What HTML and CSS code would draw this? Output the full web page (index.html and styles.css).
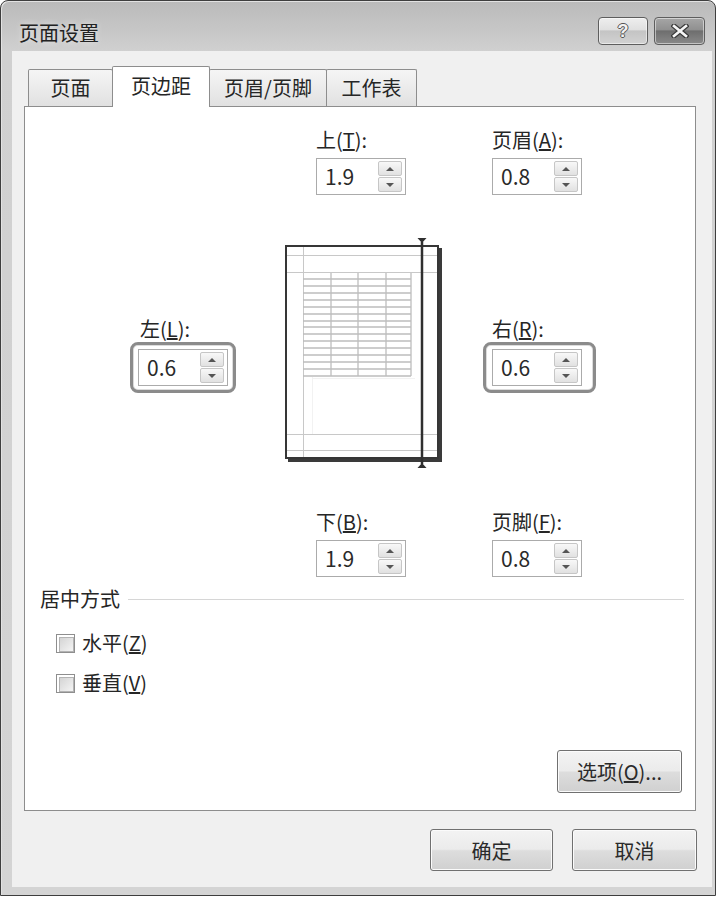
FILE: index.html
```html
<!DOCTYPE html>
<html lang="zh-CN">
<head>
<meta charset="utf-8">
<title>页面设置</title>
<link rel="stylesheet" href="styles.css">
</head>
<body>
<div class="window">
  <div class="titlebar">
    <div class="title">页面设置</div>
    <div class="caption">
      <div class="cap cap-help"><span class="q">?</span></div>
      <div class="cap cap-close">
        <svg width="18" height="14" viewBox="0 0 18 14">
          <path d="M3 2 L15 12 M15 2 L3 12" stroke="#3a3a3a" stroke-width="5" stroke-linecap="square"/>
          <path d="M3 2 L15 12 M15 2 L3 12" stroke="#f6f6f6" stroke-width="2.6" stroke-linecap="square"/>
        </svg>
      </div>
    </div>
  </div>
  <div class="client">
    <div class="tabs">
      <div class="tab t1">页面</div>
      <div class="tab t2 active">页边距</div>
      <div class="tab t3">页眉/页脚</div>
      <div class="tab t4">工作表</div>
    </div>
    <div class="panel">
      <div class="row row-top">
        <div class="field">
          <div class="label">上(<u>T</u>):</div>
          <div class="spin"><span class="val">1.9</span><div class="arrows"><span class="up"></span><span class="down"></span></div></div>
        </div>
        <div class="field">
          <div class="label">页眉(<u>A</u>):</div>
          <div class="spin"><span class="val">0.8</span><div class="arrows"><span class="up"></span><span class="down"></span></div></div>
        </div>
      </div>
      <div class="row row-mid">
        <div class="side side-left">
          <div class="label">左(<u>L</u>):</div>
          <div class="hl">
            <div class="spin"><span class="val">0.6</span><div class="arrows"><span class="up"></span><span class="down"></span></div></div>
          </div>
        </div>
        <svg class="preview" width="160" height="232" viewBox="0 0 160 232">
          <rect x="5" y="11" width="154" height="214" fill="#3a3a3a"/>
          <rect x="3" y="9" width="152" height="212" fill="#fff" stroke="#363636" stroke-width="2"/>
          <g stroke="#c8c8c8" stroke-width="1">
            <line x1="20.5" y1="10" x2="20.5" y2="220"/>
            <line x1="4" y1="18.5" x2="154" y2="18.5"/>
            <line x1="4" y1="35.5" x2="154" y2="35.5"/>
            <line x1="4" y1="197.5" x2="154" y2="197.5"/>
            <line x1="4" y1="213.5" x2="154" y2="213.5"/>
          </g>
          <g stroke="#f2f2f2" stroke-width="1">
            <line x1="29.5" y1="140" x2="29.5" y2="197"/>
            <line x1="29" y1="141.5" x2="132" y2="141.5"/>
          </g>
          <g stroke="#bdbdbd" stroke-width="1.3">
            <line x1="20" y1="42" x2="128" y2="42"/>
            <line x1="20" y1="49" x2="128" y2="49"/>
            <line x1="20" y1="56" x2="128" y2="56"/>
            <line x1="20" y1="63" x2="128" y2="63"/>
            <line x1="20" y1="70" x2="128" y2="70"/>
            <line x1="20" y1="77" x2="128" y2="77"/>
            <line x1="20" y1="84" x2="128" y2="84"/>
            <line x1="20" y1="90" x2="128" y2="90"/>
            <line x1="20" y1="97" x2="128" y2="97"/>
            <line x1="20" y1="104" x2="128" y2="104"/>
            <line x1="20" y1="111" x2="128" y2="111"/>
            <line x1="20" y1="118" x2="128" y2="118"/>
            <line x1="20" y1="125" x2="128" y2="125"/>
            <line x1="20" y1="132" x2="128" y2="132"/>
            <line x1="20" y1="139" x2="128" y2="139"/>
            <line x1="48" y1="36" x2="48" y2="139"/>
            <line x1="75" y1="36" x2="75" y2="139"/>
            <line x1="103" y1="36" x2="103" y2="139"/>
            <line x1="128" y1="36" x2="128" y2="139"/>
          </g>
          <line x1="139" y1="5" x2="139" y2="227" stroke="#303030" stroke-width="2.5"/>
          <polygon points="134.5,1 143.5,1 139,6" fill="#303030"/>
          <polygon points="134.5,231 143.5,231 139,226" fill="#303030"/>
        </svg>
        <div class="side side-right">
          <div class="label">右(<u>R</u>):</div>
          <div class="hl hl-right">
            <div class="spin"><span class="val">0.6</span><div class="arrows"><span class="up"></span><span class="down"></span></div></div>
          </div>
        </div>
      </div>
      <div class="row row-bottom">
        <div class="field">
          <div class="label">下(<u>B</u>):</div>
          <div class="spin"><span class="val">1.9</span><div class="arrows"><span class="up"></span><span class="down"></span></div></div>
        </div>
        <div class="field">
          <div class="label">页脚(<u>F</u>):</div>
          <div class="spin"><span class="val">0.8</span><div class="arrows"><span class="up"></span><span class="down"></span></div></div>
        </div>
      </div>
      <div class="group">
        <div class="group-head"><span>居中方式</span><span class="rule"></span></div>
        <div class="check"><span class="box"></span>水平(<u>Z</u>)</div>
        <div class="check"><span class="box"></span>垂直(<u>V</u>)</div>
      </div>
      <div class="options"><button class="btn btn-opt">选项(<u>O</u>)...</button></div>
    </div>
    <div class="footer">
      <button class="btn btn-ok">确定</button>
      <button class="btn btn-cancel">取消</button>
    </div>
  </div>
</div>
</body>
</html>
```

FILE: styles.css
```css
* { box-sizing: border-box; }
html, body { margin: 0; padding: 0; background: #ffffff; }
body {
  width: 723px;
  height: 901px;
  overflow: hidden;
  font-family: "Noto Sans CJK SC", "Noto Sans", sans-serif;
  color: #262626;
}
.window {
  width: 716px;
  height: 896px;
  border: 1px solid #3e3e3e;
  border-radius: 8px 8px 0 0;
  background: linear-gradient(180deg, #bababa 0px, #c6c6c6 28px, #d0d0d0 50px, #d4d4d4 100%);
  box-shadow: inset 1px 1px 0 #e2e2e2;
  display: flex;
  flex-direction: column;
}
.titlebar {
  height: 50px;
  flex: none;
  display: flex;
  justify-content: space-between;
  align-items: flex-start;
  padding: 0 10px 0 18px;
}
.title {
  margin-top: 20px;
  font-size: 20px;
  line-height: 24px;
  color: #222;
  text-shadow: 0 0 6px rgba(255,255,255,0.7);
}
.caption { display: flex; gap: 6px; margin-top: 16px; }
.cap {
  height: 28px;
  border: 1px solid #5e5e5e;
  border-radius: 4px;
  display: flex;
  align-items: center;
  justify-content: center;
  box-shadow: inset 0 0 0 1px rgba(255,255,255,0.5);
}
.cap-help {
  width: 50px;
  background: linear-gradient(180deg, #eeeeee 0%, #e0e0e0 45%, #c4c4c4 50%, #d2d2d2 100%);
}
.cap-close {
  width: 51px;
  background: linear-gradient(180deg, #a6a6a6 0%, #909090 45%, #6e6e6e 50%, #8a8a8a 100%);
}
.q {
  font-family: "Liberation Sans", sans-serif;
  font-weight: bold;
  font-size: 18px;
  line-height: 20px;
  color: #f2f2f2;
  text-shadow: 1px 0 0 #555, -1px 0 0 #555, 0 1px 0 #555, 0 -1px 0 #555;
}
.client {
  flex: 1;
  margin: 0 3px 8px 11px;
  background: #f0f0f0;
  display: flex;
  flex-direction: column;
  padding-top: 15px;
}
.tabs {
  display: flex;
  align-items: flex-end;
  height: 41px;
  margin-left: 16px;
}
.tab {
  height: 38px;
  border: 1px solid #8d8d8d;
  border-bottom: none;
  border-radius: 2px 2px 0 0;
  background: linear-gradient(180deg, #f5f5f5 0%, #ebebeb 50%, #e0e0e0 100%);
  font-size: 20px;
  line-height: 36px;
  text-align: center;
  margin-left: -1px;
  white-space: nowrap;
}
.tab:first-child { margin-left: 0; }
.tab.active {
  height: 41px;
  background: #ffffff;
  line-height: 38px;
  position: relative;
  z-index: 1;
}
.t1 { width: 85px; }
.t2 { width: 98px; }
.t3 { width: 118px; }
.t4 { width: 91px; }
.panel {
  margin: -1px 0 0 12px;
  width: 672px;
  height: 705px;
  border: 1px solid #8d8d8d;
  background: #ffffff;
  display: flex;
  flex-direction: column;
  padding: 21px 0 17px 0;
}
.row { display: flex; align-items: flex-start; }
.row-top, .row-bottom { padding-left: 291px; gap: 86px; }
.row-bottom { margin-top: 42px; }
.label {
  font-size: 20px;
  line-height: 24px;
  height: 24px;
  margin-bottom: 6px;
  white-space: nowrap;
}
.spin {
  width: 90px;
  height: 37px;
  border: 1px solid #ababab;
  background: #ffffff;
  display: flex;
  align-items: center;
  padding: 0 3px 0 8px;
}
.val { flex: 1; font-size: 21px; line-height: 22px; color: #2a2a2a; padding-bottom: 2px; }
.arrows {
  width: 24px;
  height: 31px;
  display: flex;
  flex-direction: column;
  gap: 1px;
}
.arrows span {
  flex: 1;
  border: 1px solid #c6c6c6;
  border-radius: 2px;
  background: linear-gradient(180deg, #f8f8f8, #e1e1e1);
  display: flex;
  align-items: center;
  justify-content: center;
}
.arrows span::before {
  content: "";
  width: 0;
  height: 0;
  border-left: 4px solid transparent;
  border-right: 4px solid transparent;
}
.arrows .up::before { border-bottom: 4px solid #555555; }
.arrows .down::before { border-top: 4px solid #555555; }
.row-mid { height: 230px; margin-top: 43px; padding-left: 105px; }
.side { margin-top: 79px; }
.side .label { margin-bottom: 1px; }
.side-left .label { margin-left: 10px; }
.side-right { margin-left: 40px; }
.side-right .label { margin-left: 9px; }
.hl {
  border: 3px solid #8b8b8b;
  border-radius: 8px;
  padding: 4px 5px;
  box-shadow: inset 0 0 0 1px #dcdcdc;
}
.hl-right { padding: 4px 11px 4px 6px; }
.preview { flex: none; margin: -1px 0 0 47px; display: block; }
.group { margin-top: 10px; padding: 0 11px 0 15px; }
.group-head {
  display: flex;
  align-items: center;
  font-size: 20px;
  line-height: 24px;
}
.rule { flex: 1; height: 1px; background: #d6d6d6; margin-left: 8px; }
.check {
  display: flex;
  align-items: center;
  font-size: 20px;
  line-height: 24px;
  margin: 20px 0 0 16px;
}
.check + .check { margin-top: 16px; }
.box {
  width: 19px;
  height: 19px;
  border: 1px solid #8e8e8e;
  background: #ffffff;
  padding: 2px;
  margin-right: 7px;
  display: block;
}
.box::after {
  content: "";
  display: block;
  width: 100%;
  height: 100%;
  border: 1px solid #b3b3b3;
  background: linear-gradient(135deg, #d4d4d4, #f4f4f4);
}
.options {
  margin-top: auto;
  display: flex;
  justify-content: flex-end;
  padding-right: 13px;
}
.btn {
  height: 42px;
  border: 1px solid #707070;
  border-radius: 3px;
  background: linear-gradient(180deg, #f3f3f3 0%, #ebebeb 48%, #dddddd 52%, #d0d0d0 100%);
  box-shadow: inset 0 0 0 1px #fbfbfb;
  font-family: "Noto Sans CJK SC", "Noto Sans", sans-serif;
  font-size: 20px;
  color: #2a2a2a;
  padding: 0;
}
.btn-opt { width: 125px; height: 43px; }
.footer {
  display: flex;
  justify-content: flex-end;
  gap: 19px;
  margin-top: 18px;
  padding-right: 15px;
}
.btn-ok { width: 123px; }
.btn-cancel { width: 125px; }
```
